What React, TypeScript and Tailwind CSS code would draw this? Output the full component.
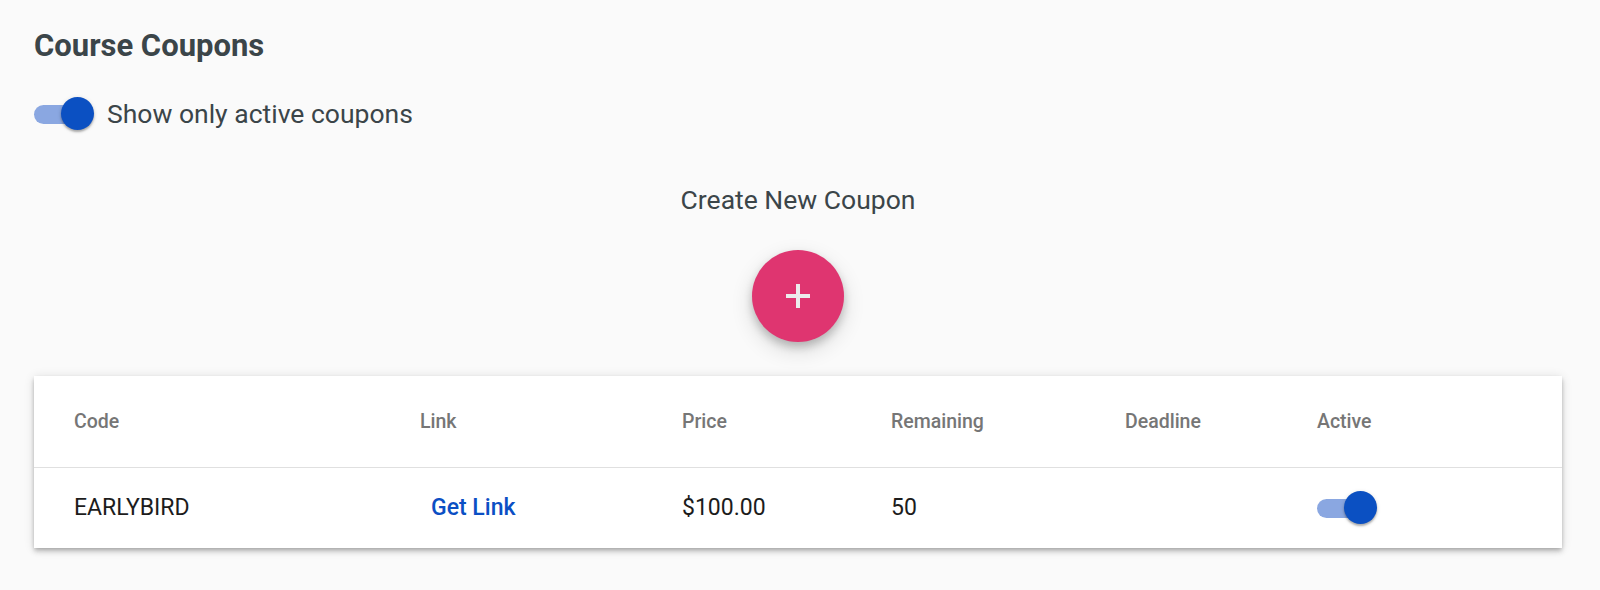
const Toggle = () => (
  <div className="relative w-[60px] h-[34px] shrink-0">
    <div className="absolute left-0 top-[8px] w-[55px] h-[19px] rounded-full bg-[#8aa7e1]" />
    <div className="absolute right-0 top-0 w-[33px] h-[33px] rounded-full bg-[#0b50c2] shadow-[0_2px_2px_rgba(0,0,0,0.25),0_1px_4px_rgba(0,0,0,0.15)]" />
  </div>
);

const columns = "grid grid-cols-[346px_262px_209px_234px_192px_1fr] pl-[40px] items-center";

const App = () => {
  return (
    <div className="min-h-[590px] w-full bg-[#fafafa] pl-[34px] pr-[38px] font-['Roboto',sans-serif]">
      <h1 className="pt-[30px] text-[31px] leading-[32px] font-bold text-[#3b4549]">
        Course Coupons
      </h1>

      <div className="mt-[35px] flex items-center gap-[13px]">
        <Toggle />
        <span className="text-[26.5px] leading-[34px] text-[#3b4549]">Show only active coupons</span>
      </div>

      <div className="flex flex-col items-center">
        <p className="mt-[54px] text-[26.5px] leading-[30px] text-[#3b4549]">Create New Coupon</p>
        <button className="mt-[35px] w-[92px] h-[92px] rounded-full bg-[#df3570] flex items-center justify-center shadow-[0_5px_8px_rgba(0,0,0,0.2),0_8px_22px_rgba(0,0,0,0.14)]">
          <svg width="26" height="26" viewBox="0 0 26 26">
            <path d="M13 1v24M1 13h24" stroke="#ececec" strokeWidth="4" />
          </svg>
        </button>
      </div>

      <div className="mt-[34px] bg-white shadow-[0_2px_4px_-1px_rgba(0,0,0,0.2),0_4px_5px_0_rgba(0,0,0,0.14),0_1px_10px_0_rgba(0,0,0,0.12)]">
        <div className={`${columns} h-[92px] border-b border-[#e0e0e0] text-[19.5px] font-medium text-[#767676]`}>
          <span>Code</span>
          <span>Link</span>
          <span>Price</span>
          <span>Remaining</span>
          <span>Deadline</span>
          <span>Active</span>
        </div>
        <div className={`${columns} h-[80px] text-[23px] text-[#1c1c1c]`}>
          <span>EARLYBIRD</span>
          <span className="pl-[11px] font-medium text-[#0b4fc4]">Get Link</span>
          <span>$100.00</span>
          <span>50</span>
          <span></span>
          <div><Toggle /></div>
        </div>
      </div>
    </div>
  );
};

export default App;
